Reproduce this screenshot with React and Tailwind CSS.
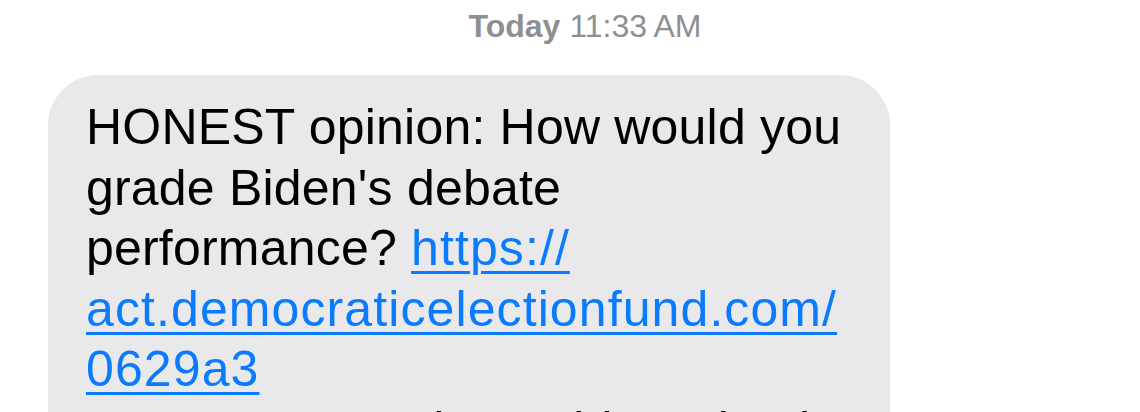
import React from "react";

export default function App() {
  const font = { fontFamily: '"Liberation Sans", Arial, sans-serif' };

  return (
    <div className="w-[1140px] h-[412px] overflow-hidden bg-white" style={font}>
      {/* hora del mensaje */}
      <div className="pt-[7px] pl-[30px] flex justify-center text-[32px] leading-[38px] text-[#8e8e93]">
        <span className="font-semibold">Today</span>
        <span className="ml-[9px]">11:33&#8239;AM</span>
      </div>

      {/* burbuja recibida */}
      <div className="mt-[30px] ml-[48px] w-[842px] rounded-[50px] bg-[#e9e9eb] pl-[38px] pr-[30px] pt-[22px] pb-[30px]">
        <p className="text-[50px] leading-[60.5px] tracking-[0.2px] text-black whitespace-nowrap">
          HONEST opinion: How would you
          <br />
          grade Biden's debate
          <br />
          performance?{" "}
          <a className="text-[#0a7aff] tracking-[1.1px] underline decoration-[3px] underline-offset-[6px]">
            https://
            <br />
            act.democraticelectionfund.com/
            <br />
            0629a3
          </a>
          <br />
          Dems want to show Biden's back
        </p>
      </div>
    </div>
  );
}
